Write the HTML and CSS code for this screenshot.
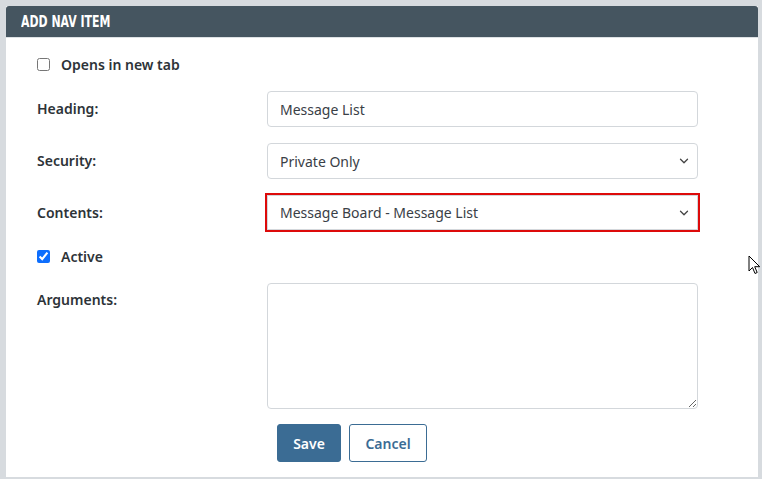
FILE: index.html
```html
<!DOCTYPE html>
<html>
<head>
<meta charset="utf-8">
<link rel="stylesheet" href="styles.css">
</head>
<body>
<div class="panel">
  <div class="panel-head"><span class="title">ADD NAV ITEM</span></div>
  <form class="panel-body">
    <label class="check-row"><input type="checkbox"> <span>Opens in new tab</span></label>
    <div class="row">
      <label class="label">Heading:</label>
      <input class="control" type="text" value="Message List">
    </div>
    <div class="row">
      <label class="label">Security:</label>
      <div class="select-wrap">
        <select class="control select"><option>Private Only</option></select>
        <svg class="chev" width="10" height="6" viewBox="0 0 10 6"><path d="M1.5 1.2l3.5 3.5 3.5-3.5" fill="none" stroke="#444" stroke-width="1.3" stroke-linecap="round" stroke-linejoin="round"/></svg>
      </div>
    </div>
    <div class="row row-contents">
      <label class="label">Contents:</label>
      <div class="select-wrap">
        <select class="control select highlight"><option>Message Board - Message List</option></select>
        <svg class="chev" width="10" height="6" viewBox="0 0 10 6"><path d="M1.5 1.2l3.5 3.5 3.5-3.5" fill="none" stroke="#444" stroke-width="1.3" stroke-linecap="round" stroke-linejoin="round"/></svg>
      </div>
    </div>
    <label class="check-row check-active"><input type="checkbox" checked> <span>Active</span></label>
    <div class="row row-top">
      <label class="label label-top">Arguments:</label>
      <textarea class="control area"></textarea>
    </div>
    <div class="buttons">
      <button type="button" class="btn btn-primary">Save</button>
      <button type="button" class="btn btn-outline">Cancel</button>
    </div>
  </form>
</div>
<svg class="cursor" width="13" height="20" viewBox="0 0 13 20"><path d="M1 1v15l3.5-3.5 2.5 6 2.2-1-2.5-5.8h5z" fill="#fff" stroke="#000" stroke-width="1" stroke-linejoin="round"/></svg>
</body>
</html>
```
FILE: styles.css
```css
* { box-sizing: border-box; }
html, body { margin: 0; padding: 0; }
body {
  background: #d7dbdf;
  width: 762px;
  height: 479px;
  padding: 6px 4px 0 6px;
  font-family: "Noto Sans", "Open Sans", sans-serif;
  font-size: 14px;
  color: #2d3338;
  position: relative;
  overflow: hidden;
}
.panel {
  width: 752px;
  background: #fff;
}
.panel-head {
  height: 32px;
  background: #455560;
  border-bottom: 1px solid #dde1e4;
  border-radius: 3px 3px 0 0;
  color: #fff;
  padding-left: 15px;
  line-height: 31px;
}
.title {
  display: inline-block;
  font-family: "DejaVu Sans Condensed", "DejaVu Sans", sans-serif;
  font-weight: 700;
  font-size: 16px;
  transform: scaleX(0.76);
  transform-origin: left center;
  white-space: nowrap;
}
.panel-body {
  display: flex;
  flex-direction: column;
  padding: 16px 0 15px 31px;
  margin: 0;
}
.check-row {
  display: flex;
  align-items: center;
  height: 20px;
  font-weight: 600;
}
.check-row input {
  width: 13px;
  height: 13px;
  margin: 0 11px 0 0;
  accent-color: #0d6efd;
}
.row {
  display: flex;
  align-items: center;
  margin-top: 17px;
}
.row + .row { margin-top: 16px; }
.check-active { margin-top: 16px; }
.row-top { align-items: flex-start; margin-top: 17px; }
.label {
  width: 230px;
  font-weight: 600;
  line-height: 18px;
}
.label-top { padding-top: 8px; }
.control {
  width: 431px;
  height: 36px;
  border: 1px solid #d3d7db;
  border-radius: 4px;
  background: #fff;
  font-family: inherit;
  font-size: 14px;
  color: #3a4046;
  padding: 0 12px;
  outline: none;
}
.select-wrap { position: relative; }
.select { appearance: none; -webkit-appearance: none; display: block; }
.highlight {
  height: 35px;
  border-radius: 0;
  outline: 2px solid #dd0a0a;
  outline-offset: 0;
}
.chev {
  position: absolute;
  right: 9px;
  top: 15px;
}
.area {
  height: 126px;
  resize: both;
  padding: 8px 12px;
}
.buttons {
  display: flex;
  gap: 8px;
  margin-top: 15px;
  padding-left: 240px;
}
.btn {
  height: 38px;
  border-radius: 3px;
  font-family: inherit;
  font-size: 14px;
  font-weight: 600;
  padding: 0 15px;
}
.btn-primary {
  width: 64px;
  background: #3b6c94;
  border: 1px solid #3b6c94;
  color: #fff;
}
.btn-outline {
  width: 78px;
  background: #fff;
  border: 1px solid #3b6c94;
  color: #3b6c94;
}
.cursor {
  position: absolute;
  left: 748px;
  top: 255px;
}
```
